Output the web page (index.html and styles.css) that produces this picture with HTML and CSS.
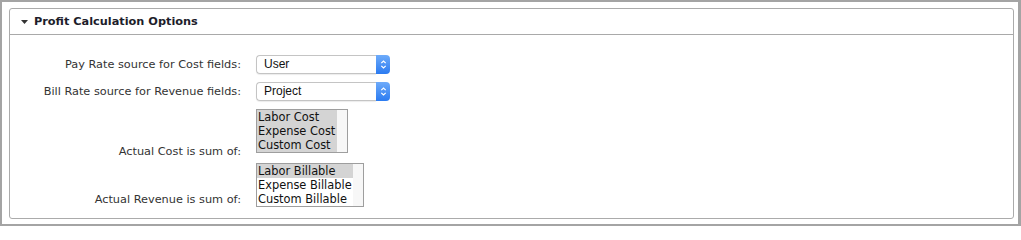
FILE: index.html
```html
<!DOCTYPE html>
<html>
<head>
<meta charset="utf-8">
<link rel="stylesheet" href="styles.css">
</head>
<body>
<div class="frame">
  <section class="panel">
    <header class="panel-head">
      <svg class="caret" width="7" height="4" viewBox="0 0 7 4"><polygon points="0,0 7,0 3.5,4" fill="#333"/></svg>
      <h2 class="panel-title">Profit Calculation Options</h2>
    </header>
    <div class="panel-body">
      <div class="row row-select">
        <label class="row-label">Pay Rate source for Cost fields:</label>
        <div class="select">
          <span class="select-value">User</span>
          <span class="select-btn"><svg width="7" height="11" viewBox="0 0 7 11"><path d="M1.3 4.2 L3.5 2 L5.7 4.2 M1.3 6.8 L3.5 9 L5.7 6.8" fill="none" stroke="#fff" stroke-width="1.2"/></svg></span>
        </div>
      </div>
      <div class="row row-select">
        <label class="row-label">Bill Rate source for Revenue fields:</label>
        <div class="select">
          <span class="select-value">Project</span>
          <span class="select-btn"><svg width="7" height="11" viewBox="0 0 7 11"><path d="M1.3 4.2 L3.5 2 L5.7 4.2 M1.3 6.8 L3.5 9 L5.7 6.8" fill="none" stroke="#fff" stroke-width="1.2"/></svg></span>
        </div>
      </div>
      <div class="row row-list row-cost">
        <label class="row-label">Actual Cost is sum of:</label>
        <div class="listbox lb-cost">
          <div class="options">
            <div class="opt sel">Labor Cost</div>
            <div class="opt sel">Expense Cost</div>
            <div class="opt sel">Custom Cost</div>
          </div>
          <div class="track"></div>
        </div>
      </div>
      <div class="row row-list row-bill">
        <label class="row-label">Actual Revenue is sum of:</label>
        <div class="listbox lb-bill">
          <div class="options">
            <div class="opt sel">Labor Billable</div>
            <div class="opt">Expense Billable</div>
            <div class="opt">Custom Billable</div>
          </div>
          <div class="track"></div>
        </div>
      </div>
    </div>
  </section>
</div>
</body>
</html>
```
FILE: styles.css
```css
html, body {
  margin: 0;
  padding: 0;
}
body {
  width: 1021px;
  height: 226px;
  overflow: hidden;
  background: #fff;
  font-family: "DejaVu Sans", Verdana, sans-serif;
  color: #333;
}
.frame {
  box-sizing: border-box;
  height: 226px;
  border-style: solid;
  border-color: #a4a4a4;
  border-width: 2px 3px 2px 2px;
  padding: 6px 4px 5px 7px;
}
.panel {
  box-sizing: border-box;
  height: 211px;
  border: 1px solid #ababab;
  border-radius: 3px;
}
.panel-head {
  height: 25px;
  border-bottom: 1px solid #a9a9a9;
  display: flex;
  align-items: center;
  padding-left: 11px;
  gap: 6px;
}
.caret {
  display: block;
  margin-top: 1px;
}
.panel-title {
  margin: 0;
  font-size: 11.3px;
  font-weight: bold;
  color: #1d1d2b;
  line-height: 14px;
}
.panel-body {
  padding-top: 20px;
}
.row {
  display: grid;
  grid-template-columns: 231px max-content;
  column-gap: 15px;
}
.row-label {
  text-align: right;
  font-size: 11.3px;
  line-height: 14px;
  color: #333;
  white-space: nowrap;
}
.row-select {
  height: 19px;
  align-items: center;
  margin-bottom: 8px;
}
.row-list {
  align-items: start;
}
.row-list .row-label {
  align-self: end;
}
.row-cost {
  height: 50px;
  margin-bottom: 4px;
}
.row-bill {
  height: 44px;
}
.select {
  display: flex;
  width: 134px;
  height: 19px;
}
.select-value {
  flex: 1;
  box-sizing: border-box;
  border: 1px solid #c4c4c4;
  border-right: 0;
  border-radius: 4px 0 0 4px;
  padding-left: 7px;
  font-family: "Liberation Sans", Arial, sans-serif;
  font-size: 12px;
  line-height: 17px;
  color: #111;
  box-shadow: 0 1px 1px rgba(0, 0, 0, 0.08);
}
.select-btn {
  width: 14px;
  border-radius: 0 4px 4px 0;
  background: linear-gradient(#6eabfa, #2b7bf1);
  display: flex;
  align-items: center;
  justify-content: center;
}
.select-btn svg {
  display: block;
}
.listbox {
  box-sizing: border-box;
  display: flex;
  height: 44px;
  border: 1px solid #9e9e9e;
  background: #fff;
}
.lb-cost {
  width: 92px;
}
.lb-bill {
  width: 108px;
}
.options {
  flex: 1;
  overflow: hidden;
}
.opt {
  height: 14px;
  line-height: 14px;
  font-size: 11.4px;
  padding-left: 1px;
  white-space: nowrap;
  color: #111;
}
.opt.sel {
  background: #d4d4d4;
}
.track {
  width: 10px;
  background: #f7f7f7;
}
```
